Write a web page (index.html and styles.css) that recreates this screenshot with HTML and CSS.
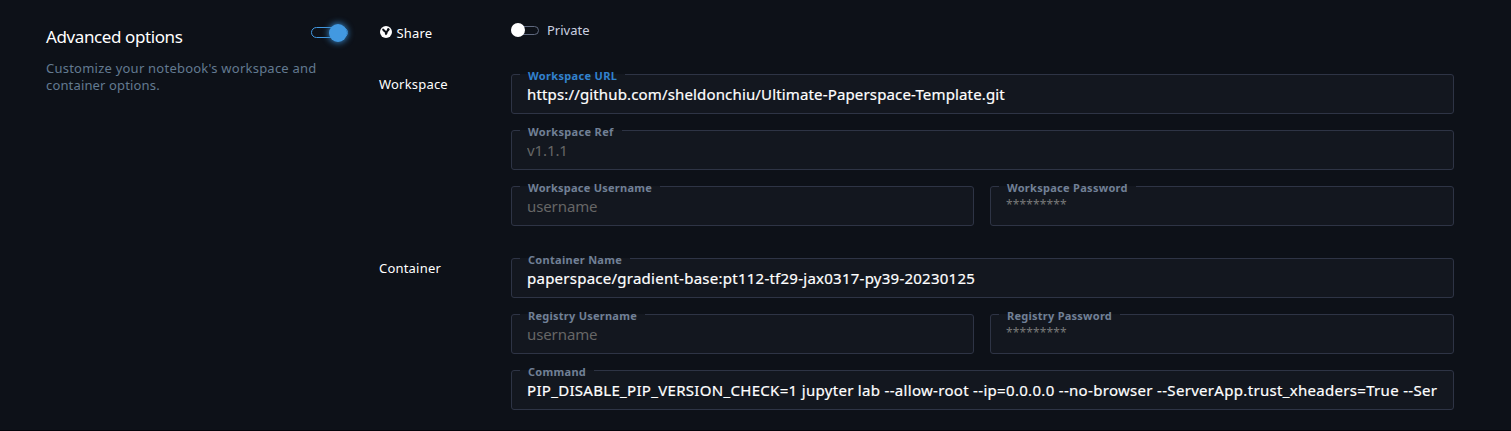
FILE: index.html
```html
<!DOCTYPE html>
<html lang="en">
<head>
<meta charset="utf-8">
<title>Advanced options</title>
<link rel="stylesheet" href="styles.css">
</head>
<body>
<main class="panel">
  <section class="intro">
    <div class="intro-head">
      <h1 class="title"><span>Advanced options</span></h1>
      <span class="switch switch-on"><span class="knob"></span></span>
    </div>
    <p class="description"><span>Customize your notebook's workspace and</span><br><span class="desc-end">container options.</span></p>
  </section>
  <section class="settings">
    <div class="row share-row">
      <h2 class="row-label share-label">
        <svg class="globe" viewBox="0 0 12 12"><circle cx="6" cy="6" r="6" fill="#fff"/><path d="M2 3 3.4 2.4 5 4 6 5 6.8 4.2 7.2 2.6 8.6 2 9.8 3.2 9.2 4.6 7.8 6 7.2 8 6 9.2 5 8.2 4.8 6.6 2.8 5Z" fill="#0d1118"/></svg>
        <span>Share</span>
      </h2>
      <div class="share-control">
        <span class="switch switch-off"><span class="knob"></span></span>
        <span class="private">Private</span>
      </div>
    </div>
    <div class="row workspace-row">
      <h2 class="row-label"><span class="t-workspace">Workspace</span></h2>
      <div class="fields">
        <div class="field active"><span class="label l-url">Workspace URL</span><span class="value v-url">https://github.com/sheldonchiu/Ultimate-Paperspace-Template.git</span></div>
        <div class="field"><span class="label l-ref">Workspace Ref</span><span class="value hint v-ref">v1.1.1</span></div>
        <div class="pair">
          <div class="field"><span class="label l-wuser">Workspace Username</span><span class="value hint">username</span></div>
          <div class="field"><span class="label l-wpass">Workspace Password</span><span class="value hint stars">*********</span></div>
        </div>
      </div>
    </div>
    <div class="row">
      <h2 class="row-label"><span class="t-container">Container</span></h2>
      <div class="fields">
        <div class="field"><span class="label l-name">Container Name</span><span class="value v-name">paperspace/gradient-base:pt112-tf29-jax0317-py39-20230125</span></div>
        <div class="pair">
          <div class="field"><span class="label l-ruser">Registry Username</span><span class="value hint">username</span></div>
          <div class="field"><span class="label l-rpass">Registry Password</span><span class="value hint stars">*********</span></div>
        </div>
        <div class="field"><span class="label l-cmd">Command</span><span class="value v-cmd">PIP_DISABLE_PIP_VERSION_CHECK=1 jupyter lab --allow-root --ip=0.0.0.0 --no-browser --ServerApp.trust_xheaders=True --Ser</span></div>
      </div>
    </div>
  </section>
</main>
</body>
</html>
```
FILE: styles.css
```css
* { box-sizing: border-box; }
body {
  margin: 0;
  background: #0d1118;
  color: #fff;
  font-family: "Noto Sans", "Open Sans", sans-serif;
}
.panel {
  display: flex;
  height: 431px;
  padding: 0 57px 0 46px;
  border-bottom: 1px solid #03030a;
  overflow: hidden;
}
.intro { width: 333px; flex: none; padding-top: 23px; }
.intro-head { display: flex; justify-content: space-between; width: 302px; height: 28px; }
.title { margin: 0; font-size: 17px; font-weight: 400; line-height: 28px; letter-spacing: -0.4px; }
.description { margin: 9px 0 0; font-size: 13px; line-height: 17px; letter-spacing: 0.23px; color: #637a91; white-space: nowrap; }
.desc-end { letter-spacing: 0.15px; }

.switch { position: relative; flex: none; border: 1px solid; border-radius: 6px; }
.switch .knob { position: absolute; border-radius: 50%; }
.switch-on { width: 37px; height: 11px; margin-top: 4px; border-color: #4299e1; }
.switch-on .knob { width: 18px; height: 18px; top: -4px; right: 0; background: #4299e1; box-shadow: 0 0 6px 1px #347bb8; }
.switch-off { width: 28px; height: 9px; border-color: #606a80; }
.switch-off .knob { width: 14px; height: 14px; top: -4px; left: -1px; background: #fff; }

.settings { flex: 1; min-width: 0; }
.row { display: flex; }
.share-row { height: 74px; }
.workspace-row { margin-bottom: 32px; }
.row-label { flex: none; width: 132px; margin: 0; font-size: 13px; font-weight: 400; line-height: 20px; letter-spacing: 0.2px; }
.share-label { display: flex; padding-top: 23px; }
.globe { width: 12px; height: 12px; margin: 3px 5px 0 1px; }
.share-label span { margin-left: -0.5px; }
.share-control { display: flex; align-items: center; height: 20px; margin-top: 20px; }
.private { margin-left: 8px; font-size: 13px; line-height: 20px; color: #cbd0e0; }

.fields { flex: 1; min-width: 0; display: flex; flex-direction: column; gap: 16px; }
.pair { display: grid; grid-template-columns: 463px 464px; gap: 16px; }
.field {
  position: relative;
  min-width: 0;
  height: 40px;
  padding: 8px 15px 0;
  border: 1px solid #2e3445;
  border-radius: 3px;
  background: #13171f;
}
.label {
  position: absolute;
  top: -7px;
  left: 8px;
  padding: 0 8px;
  background: linear-gradient(#0d1118 6px, #13171f 6px);
  color: #718096;
  font-size: 11px;
  font-weight: 700;
  line-height: 16px;
  letter-spacing: 0.25px;
  white-space: nowrap;
}
.l-url, .l-ref { letter-spacing: 0.34px; }
.l-wpass, .l-cmd, .l-name { letter-spacing: 0.29px; }
.active .label { color: #3182ce; }
.value {
  display: block;
  overflow: hidden;
  font-size: 15px;
  line-height: 22px;
  white-space: nowrap;
  -webkit-text-stroke: 0.2px;
}
.v-url { letter-spacing: 0.15px; }
.v-name { letter-spacing: 0.25px; }
.v-cmd { letter-spacing: 0.31px; }
.hint { color: #666; letter-spacing: -0.1px; -webkit-text-stroke: 0; }
.stars { font-size: 12px; letter-spacing: 0.15px; line-height: 20px; color: #777; }
```
